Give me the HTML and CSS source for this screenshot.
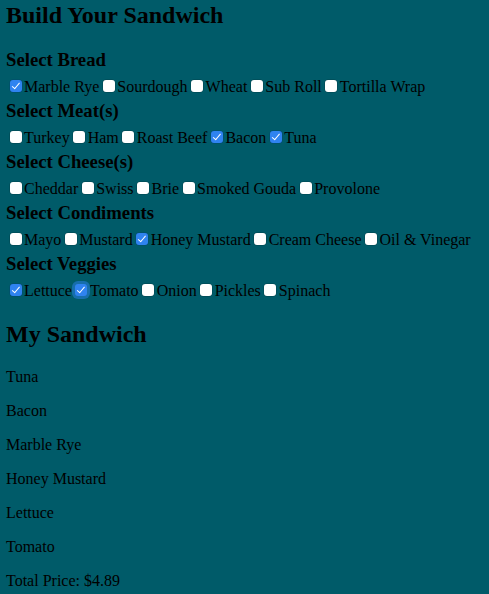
FILE: index.html
```html
<!DOCTYPE html>
<html>
<head>
<meta charset="utf-8">
<title>Build Your Sandwich</title>
<link rel="stylesheet" href="styles.css">
</head>
<body>
<div class="builder">
  <h2 class="title">Build Your Sandwich</h2>
  <div class="group">
    <h3 class="group-title">Select Bread</h3>
    <div class="options"><input type="checkbox" class="box" checked><label>Marble Rye</label><input type="checkbox" class="box"><label>Sourdough</label><input type="checkbox" class="box"><label>Wheat</label><input type="checkbox" class="box"><label>Sub Roll</label><input type="checkbox" class="box"><label>Tortilla Wrap</label></div>
  </div>
  <div class="group">
    <h3 class="group-title">Select Meat(s)</h3>
    <div class="options"><input type="checkbox" class="box"><label>Turkey</label><input type="checkbox" class="box"><label>Ham</label><input type="checkbox" class="box"><label>Roast Beef</label><input type="checkbox" class="box" checked><label>Bacon</label><input type="checkbox" class="box" checked><label>Tuna</label></div>
  </div>
  <div class="group">
    <h3 class="group-title">Select Cheese(s)</h3>
    <div class="options"><input type="checkbox" class="box"><label>Cheddar</label><input type="checkbox" class="box"><label>Swiss</label><input type="checkbox" class="box"><label>Brie</label><input type="checkbox" class="box"><label>Smoked Gouda</label><input type="checkbox" class="box"><label>Provolone</label></div>
  </div>
  <div class="group">
    <h3 class="group-title">Select Condiments</h3>
    <div class="options"><input type="checkbox" class="box"><label>Mayo</label><input type="checkbox" class="box"><label>Mustard</label><input type="checkbox" class="box" checked><label>Honey Mustard</label><input type="checkbox" class="box"><label>Cream Cheese</label><input type="checkbox" class="box"><label>Oil &amp; Vinegar</label></div>
  </div>
  <div class="group">
    <h3 class="group-title">Select Veggies</h3>
    <div class="options"><input type="checkbox" class="box" checked><label>Lettuce</label><input type="checkbox" class="box focused" checked><label>Tomato</label><input type="checkbox" class="box"><label>Onion</label><input type="checkbox" class="box"><label>Pickles</label><input type="checkbox" class="box"><label>Spinach</label></div>
  </div>
</div>
<div class="summary">
  <h2 class="summary-title">My Sandwich</h2>
  <p class="item">Tuna</p>
  <p class="item">Bacon</p>
  <p class="item">Marble Rye</p>
  <p class="item">Honey Mustard</p>
  <p class="item">Lettuce</p>
  <p class="item">Tomato</p>
  <p class="item">Total Price: $4.89</p>
</div>
</body>
</html>
```
FILE: styles.css
```css
html, body {
  background: #005b69;
}
body {
  margin: 0;
  padding: 1.5px 6px 0;
  font-family: "Liberation Serif", "Times New Roman", serif;
  color: #000;
}
.title {
  font-size: 24px;
  font-weight: bold;
  margin: 0 0 20px;
}
.group {
  margin-bottom: 4px;
}
.group-title {
  font-size: 18.72px;
  font-weight: bold;
  margin: 0 0 6px;
}
.options {
  font-size: 16px;
  white-space: nowrap;
}
.box {
  -webkit-appearance: none;
  appearance: none;
  position: relative;
  box-sizing: border-box;
  width: 12px;
  height: 12px;
  margin: 3px 2.5px 3px 3.5px;
  vertical-align: -3px;
  background: #fff;
  border-radius: 3px;
  box-shadow: 0 0 0 0.5px rgba(0,0,0,0.25);
  outline: none;
}
.box:checked {
  background: #2f83f0;
  box-shadow: 0 0 0 0.5px rgba(0,40,120,0.35);
}
.box:checked::after {
  content: "";
  position: absolute;
  left: 4px;
  top: 1.5px;
  width: 3px;
  height: 6.5px;
  border-right: 1.8px solid #fff;
  border-bottom: 1.8px solid #fff;
  transform: rotate(40deg);
}
.box.focused {
  box-shadow: 0 0 0 3px rgba(45,130,240,0.5);
}
.summary-title {
  font-size: 24px;
  font-weight: bold;
  margin: 21.3px 0 20.7px;
}
.item {
  font-size: 16px;
  line-height: 18px;
  margin: 0 0 16px;
}
```
